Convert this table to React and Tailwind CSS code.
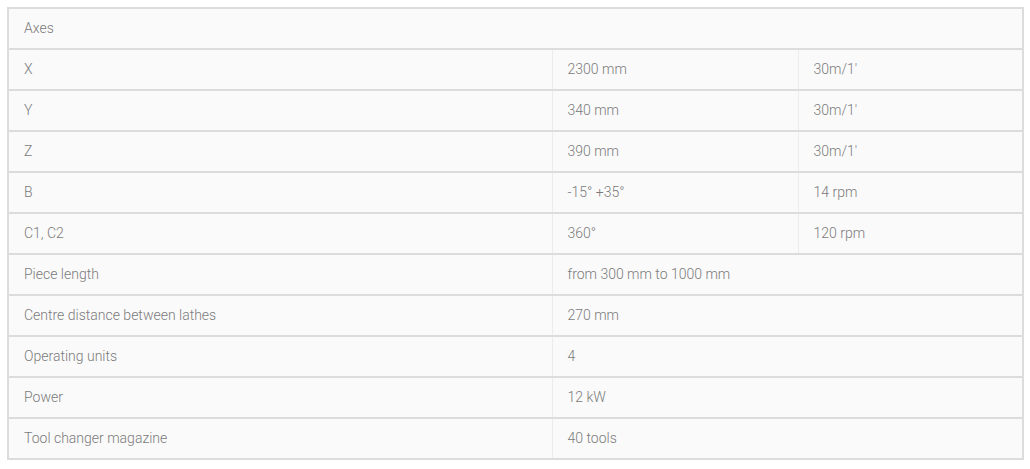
import React from "react";

const rows = [
  ["X", "2300 mm", "30m/1'"],
  ["Y", "340 mm", "30m/1'"],
  ["Z", "390 mm", "30m/1'"],
  ["B", "-15° +35°", "14 rpm"],
  ["C1, C2", "360°", "120 rpm"],
  ["Piece length", "from 300 mm to 1000 mm"],
  ["Centre distance between lathes", "270 mm"],
  ["Operating units", "4"],
  ["Power", "12 kW"],
  ["Tool changer magazine", "40 tools"],
];

const App = () => {
  return (
    <div className="min-h-screen bg-white pt-[7px] pl-[7px] font-['Roboto',sans-serif]">
      <table className="w-[1017px] border-collapse border-2 border-[#dcdcdc] bg-[#fafafa] text-[14px] font-light text-[#7a7a7a]">
        <tbody>
          <tr className="h-[41px] border-b-2 border-[#dcdcdc]">
            <td colSpan="3" className="px-[15px]">
              Axes
            </td>
          </tr>
          {rows.map((row) => (
            <tr key={row[0]} className="h-[41px] border-b-2 border-[#dcdcdc]">
              <td className="w-[544px] border-r border-[#ececec] px-[15px]">
                {row[0]}
              </td>
              {row.length === 3 ? (
                <>
                  <td className="w-[246px] border-r border-[#ececec] px-[15px]">
                    {row[1]}
                  </td>
                  <td className="px-[15px]">{row[2]}</td>
                </>
              ) : (
                <td colSpan="2" className="px-[15px]">
                  {row[1]}
                </td>
              )}
            </tr>
          ))}
        </tbody>
      </table>
    </div>
  );
};

export default App;
